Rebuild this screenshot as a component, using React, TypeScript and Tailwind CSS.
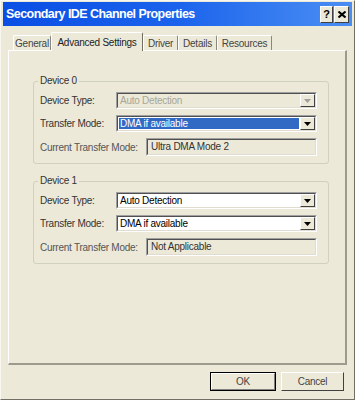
import React from 'react';

const font = "font-['Liberation_Sans',Arial,sans-serif]";

function Arrow({ disabled }: { disabled?: boolean }) {
  return (
    <div className="w-[15px] h-full bg-[#ece9d8] border border-t-white border-l-white border-r-[#404040] border-b-[#404040] flex items-center justify-center">
      <svg width="7" height="4" viewBox="0 0 7 4">
        <path d="M0 0 H7 L3.5 4 Z" fill={disabled ? '#a0a0a0' : '#000'} />
      </svg>
    </div>
  );
}

function Sunken({ children, className }: { children: React.ReactNode; className: string }) {
  return (
    <div className={`border border-t-[#a0a0a0] border-l-[#a0a0a0] border-r-white border-b-white ${className}`}>
      <div className="h-full border border-t-[#505050] border-l-[#505050] border-r-[#e0ddd0] border-b-[#e0ddd0] flex">
        {children}
      </div>
    </div>
  );
}

function Combo({ value, disabled, selected }: { value: string; disabled?: boolean; selected?: boolean }) {
  return (
    <Sunken className={`w-[201px] h-[17px] ${disabled ? 'bg-[#ece9d8]' : 'bg-white'}`}>
      <div className="flex-1 p-[1px] flex">
        <div
          className={`flex-1 flex items-center pl-[1px] leading-none ${
            selected ? 'bg-[#316ac5] text-white' : disabled ? 'text-[#a8a699]' : 'text-black'
          }`}
        >
          {value}
        </div>
      </div>
      <Arrow disabled={disabled} />
    </Sunken>
  );
}

function Group({ title, type, typeDisabled, modeSelected, current }: {
  title: string;
  type: string;
  typeDisabled?: boolean;
  modeSelected?: boolean;
  current: string;
}) {
  return (
    <div className="relative ml-[24px] w-[296px] border border-[#d0d0bf] rounded-[3px] pt-[10px] pb-[7px] pl-[6px]">
      {/* legend on the border */}
      <span className="absolute left-[4px] top-[-6px] px-[2px] bg-[#ece9d8] text-[#333] leading-none">{title}</span>
      <div className="flex flex-col gap-[6px]">
        <div className="flex items-center">
          <span className="w-[76px] text-[#333]">Device Type:</span>
          <Combo value={type} disabled={typeDisabled} />
        </div>
        <div className="flex items-center">
          <span className="w-[76px] text-[#333]">Transfer Mode:</span>
          <Combo value="DMA if available" selected={modeSelected} />
        </div>
        <div className="flex items-center">
          <span className="w-[106px] text-[#555]">Current Transfer Mode:</span>
          <Sunken className="w-[171px] h-[18px] bg-[#ece9d8]">
            <div className="flex items-center pl-[3px] text-[#333] leading-none">{current}</div>
          </Sunken>
        </div>
      </div>
    </div>
  );
}

const tabs = [
  { label: 'General', w: 'w-[38px]' },
  { label: 'Advanced Settings', w: 'w-[92px]', active: true },
  { label: 'Driver', w: 'w-[35px]' },
  { label: 'Details', w: 'w-[39px]' },
  { label: 'Resources', w: 'w-[55px]' },
];

export default function App() {
  return (
    <div className={`${font} text-[10px] tracking-[-0.25px] w-[355px] h-[400px] bg-[#ece9d8] border-l border-t border-l-[#f8f7f0] border-t-[#f8f7f0] border-r border-b border-r-[#716f64] border-b-[#716f64] pt-[1px] px-[2px] flex flex-col`}>
      {/* Title bar */}
      <div className="h-[24px] bg-gradient-to-r from-[#0a4ee4] via-[#1b63ec] to-[#4a8ef3] flex items-center pl-[3px] pr-[3px]">
        <span className="text-white font-bold text-[12.5px] tracking-[-0.55px] flex-1">Secondary IDE Channel Properties</span>
        <div className="flex gap-[1px]">
          <div className="w-[13px] h-[17px] bg-[#ece9d8] border border-t-white border-l-white border-r-[#404040] border-b-[#404040] flex items-center justify-center text-black font-bold text-[11px] leading-none">?</div>
          <div className="w-[15px] h-[17px] bg-[#ece9d8] border border-t-white border-l-white border-r-[#404040] border-b-[#404040] flex items-center justify-center">
            <svg width="8" height="7" viewBox="0 0 8 7">
              <path d="M0.5 0.5 L7.5 6.5 M7.5 0.5 L0.5 6.5" stroke="#000" strokeWidth="2" />
            </svg>
          </div>
        </div>
      </div>

      {/* Tabs */}
      <div className="mt-[6px] mx-[5px] h-[18px] flex items-end pl-[5px] relative z-10">
        {tabs.map((t) =>
          t.active ? (
            <div
              key={t.label}
              className={`${t.w} h-[19px] -mb-[1px] bg-[#ece9d8] border-l border-t border-l-white border-t-white border-r border-r-[#716f64] flex items-start pt-[2px] justify-center text-[#222] rounded-t-[2px]`}
            >
              {t.label}
            </div>
          ) : (
            <div
              key={t.label}
              className={`${t.w} h-[15px] border-l border-t border-l-white border-t-white border-r border-r-[#8a887c] flex items-center justify-center text-[#444] rounded-t-[2px]`}
            >
              {t.label}
            </div>
          )
        )}
      </div>

      {/* Panel */}
      <div className="mx-[5px] h-[315px] border-l border-t border-l-white border-t-white border-r-2 border-b-2 border-r-[#9d9b8e] border-b-[#9d9b8e] pt-[30px] flex flex-col gap-[17px]">
        <Group title="Device 0" type="Auto Detection" typeDisabled modeSelected current="Ultra DMA Mode 2" />
        <Group title="Device 1" type="Auto Detection" current="Not Applicable" />
      </div>

      {/* Buttons */}
      <div className="flex justify-end gap-[5px] pr-[8px] pt-[7px]">
        <div className="w-[66px] h-[19px] border border-black">
          <div className="h-full bg-[#ece9d8] border border-t-white border-l-white border-r-[#808080] border-b-[#808080] flex items-center justify-center text-[#444]">OK</div>
        </div>
        <div className="w-[63px] h-[19px] bg-[#ece9d8] border border-t-white border-l-white border-r-[#404040] border-b-[#404040] flex items-center justify-center text-[#444]">
          Cancel
        </div>
      </div>
    </div>
  );
}
